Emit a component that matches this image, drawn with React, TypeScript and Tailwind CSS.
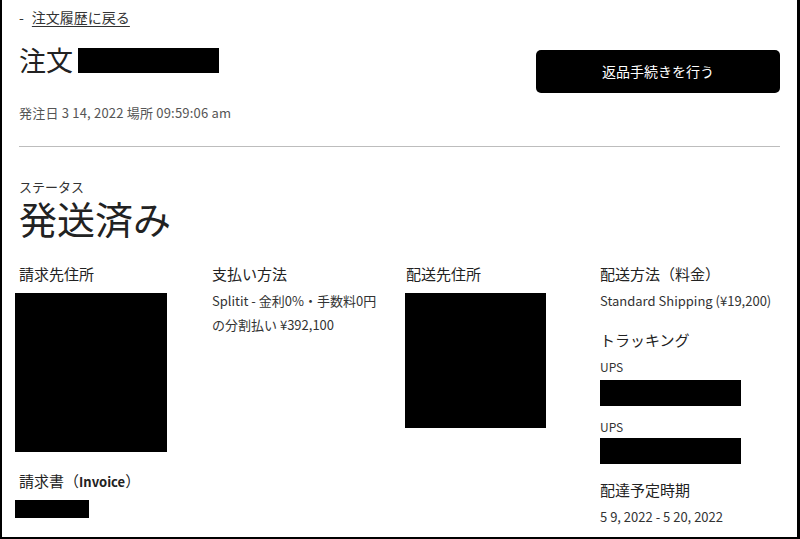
const font = { fontFamily: '"Noto Sans CJK JP", "Noto Sans", sans-serif' };

const Redacted = ({ className }: { className: string }) => <div className={`bg-black ${className}`} />;

const Heading = ({ children }: { children: React.ReactNode }) => (
  <div className="text-[15px] leading-[22px] text-[#222]">{children}</div>
);

export default function App() {
  return (
    <div
      style={font}
      className="h-[539px] w-[800px] overflow-hidden border-b-2 border-l-2 border-r-[3px] border-black bg-white pl-[17px] pr-[17px] text-[#333]"
    >
      <div className="flex justify-between">
        <div>
          <div className="pt-[7px] text-[14px] leading-[20px]">
            <span className="mr-[8px]">-</span>
            <a className="underline underline-offset-[3px]">注文履歴に戻る</a>
          </div>
          <div className="mt-[15px] flex items-center text-[27px] leading-[36px] text-[#222]">
            <span>注文</span>
            <Redacted className="ml-[5px] h-[25px] w-[141px]" />
          </div>
          <div className="mt-[25px] text-[13px] leading-[20px] tracking-[0.2px] text-[#555]">
            発注日 3 14, 2022 場所 09:59:06 am
          </div>
        </div>
        <button className="mt-[50px] h-[43px] w-[244px] rounded-[5px] bg-black text-[14px] text-white">
          返品手続きを行う
        </button>
      </div>

      <div className="mt-[23px] h-px bg-[#bdbdbd]" />

      <div className="mt-[32px] text-[13px] leading-[16px]">ステータス</div>
      <div className="mt-[2px] text-[38px] leading-[42px] text-[#222]">発送済み</div>

      <div className="mt-[24px] grid grid-cols-[193px_194px_194px_1fr]">
        <div>
          <Heading>請求先住所</Heading>
          <Redacted className="-ml-[4px] mt-[8px] h-[159px] w-[152px]" />
          <div className="mt-[18px] text-[15px] leading-[22px] text-[#222]">
            請求書（<span className="text-[13px] font-bold">Invoice</span>）
          </div>
          <Redacted className="-ml-[4px] mt-[7px] h-[18px] w-[74px]" />
        </div>
        <div>
          <Heading>支払い方法</Heading>
          <div className="mt-[4px] text-[13px] leading-[24px]">
            Splitit - 金利0%・手数料0円
            <br />
            の分割払い ¥392,100
          </div>
        </div>
        <div>
          <Heading>配送先住所</Heading>
          <Redacted className="-ml-px mt-[8px] h-[135px] w-[141px]" />
        </div>
        <div>
          <Heading>配送方法（料金）</Heading>
          <div className="mt-[6px] text-[13px] leading-[20px]">Standard Shipping (¥19,200)</div>
          <div className="mt-[18px] text-[15px] leading-[22px] text-[#222]">トラッキング</div>
          <div className="mt-[7px] text-[12px] leading-[18px]">UPS</div>
          <Redacted className="mt-[4px] h-[26px] w-[141px]" />
          <div className="mt-[12px] text-[12px] leading-[18px]">UPS</div>
          <Redacted className="mt-[2px] h-[26px] w-[141px]" />
          <div className="mt-[15px] text-[15px] leading-[22px] text-[#222]">配達予定時期</div>
          <div className="mt-[6px] text-[13px] leading-[20px]">5 9, 2022 - 5 20, 2022</div>
        </div>
      </div>
    </div>
  );
}
